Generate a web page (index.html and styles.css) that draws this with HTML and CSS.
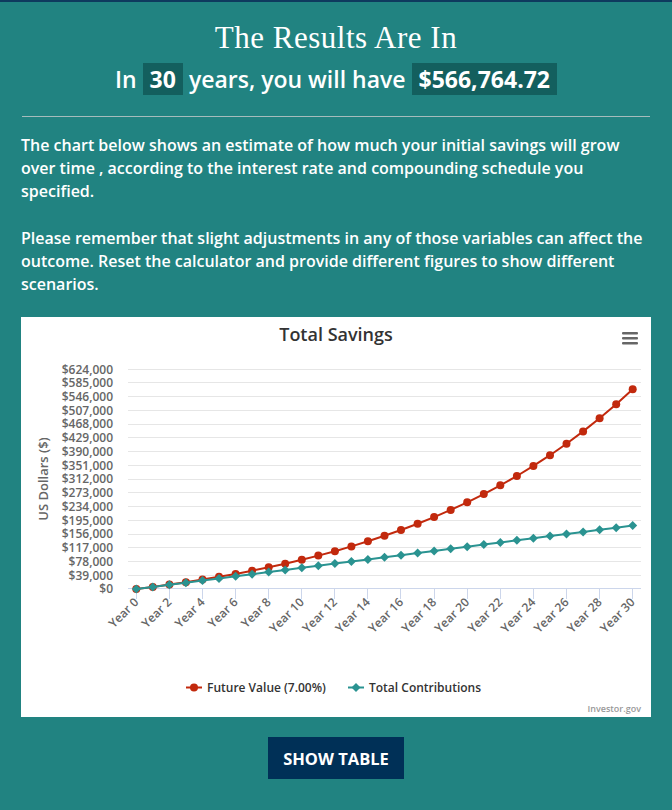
FILE: index.html
```html
<!DOCTYPE html>
<html lang="en">
<head>
<meta charset="utf-8">
<title>The Results Are In</title>
<link rel="stylesheet" href="styles.css">
</head>
<body>
<main class="results">
  <h1 class="title">The Results Are In</h1>
  <p class="summary">In <span class="hl">30</span> years, you will have <span class="hl">$566,764.72</span></p>
  <hr class="rule">
  <p class="desc">The chart below shows an estimate of how much your initial savings will grow over time , according to the interest rate and compounding schedule you specified.</p>
  <p class="desc">Please remember that slight adjustments in any of those variables can affect the outcome. Reset the calculator and provide different figures to show different scenarios.</p>
  <div class="chart">
    <svg class="chart-svg" width="630" height="400" viewBox="0 0 630 400" xmlns="http://www.w3.org/2000/svg">
      <defs>
        <marker id="dot" markerUnits="userSpaceOnUse" markerWidth="10" markerHeight="10" refX="5" refY="5" viewBox="0 0 10 10" overflow="visible">
          <circle cx="5" cy="5" r="4" fill="#c2290d"/>
        </marker>
        <marker id="dia" markerUnits="userSpaceOnUse" markerWidth="10" markerHeight="10" refX="5" refY="5" viewBox="0 0 10 10" overflow="visible">
          <path d="M5 0.5 L9.5 5 L5 9.5 L0.5 5 Z" fill="#2a9391"/>
        </marker>
      </defs>
      <text class="c-title" x="315" y="24" text-anchor="middle">Total Savings</text>
      <g class="menu" fill="#666">
        <rect x="601" y="15" width="16" height="2.5" rx="1"/>
        <rect x="601" y="20" width="16" height="2.5" rx="1"/>
        <rect x="601" y="25" width="16" height="2.5" rx="1"/>
      </g>
      <g class="grid" stroke="#e6e6e6" stroke-width="1">
        <path d="M107 52.5H620M107 65.5H620M107 79.5H620M107 93.5H620M107 107.5H620M107 120.5H620M107 134.5H620M107 148.5H620M107 162.5H620M107 175.5H620M107 189.5H620M107 203.5H620M107 217.5H620M107 230.5H620M107 244.5H620M107 258.5H620"/>
      </g>
      <g class="ylab" text-anchor="end">
        <text x="92" y="56.5">$624,000</text>
        <text x="92" y="70">$585,000</text>
        <text x="92" y="83.5">$546,000</text>
        <text x="92" y="97.5">$507,000</text>
        <text x="92" y="111">$468,000</text>
        <text x="92" y="125">$429,000</text>
        <text x="92" y="138.5">$390,000</text>
        <text x="92" y="152.5">$351,000</text>
        <text x="92" y="166">$312,000</text>
        <text x="92" y="180">$273,000</text>
        <text x="92" y="193.5">$234,000</text>
        <text x="92" y="207.5">$195,000</text>
        <text x="92" y="221">$156,000</text>
        <text x="92" y="235">$117,000</text>
        <text x="92" y="248.5">$78,000</text>
        <text x="92" y="262.5">$39,000</text>
        <text x="92" y="276">$0</text>
      </g>
      <text class="ytitle" x="0" y="0" text-anchor="middle" transform="translate(27 162) rotate(-90)">US Dollars ($)</text>
      <path d="M107 271.5H620" stroke="#ccd6eb" stroke-width="1"/>
      <g stroke="#ccd6eb" stroke-width="1">
        <path d="M115.5 272V282M148.5 272V282M181.5 272V282M214.5 272V282M247.5 272V282M280.5 272V282M313.5 272V282M346.5 272V282M379.5 272V282M413.5 272V282M446.5 272V282M479.5 272V282M512.5 272V282M545.5 272V282M578.5 272V282M611.5 272V282"/>
      </g>
      <g class="xlab" text-anchor="end">
        <text transform="translate(118.3 286) rotate(-45)">Year 0</text>
        <text transform="translate(151.4 286) rotate(-45)">Year 2</text>
        <text transform="translate(184.5 286) rotate(-45)">Year 4</text>
        <text transform="translate(217.6 286) rotate(-45)">Year 6</text>
        <text transform="translate(250.7 286) rotate(-45)">Year 8</text>
        <text transform="translate(283.8 286) rotate(-45)">Year 10</text>
        <text transform="translate(316.9 286) rotate(-45)">Year 12</text>
        <text transform="translate(349.9 286) rotate(-45)">Year 14</text>
        <text transform="translate(383.0 286) rotate(-45)">Year 16</text>
        <text transform="translate(416.1 286) rotate(-45)">Year 18</text>
        <text transform="translate(449.2 286) rotate(-45)">Year 20</text>
        <text transform="translate(482.3 286) rotate(-45)">Year 22</text>
        <text transform="translate(515.4 286) rotate(-45)">Year 24</text>
        <text transform="translate(548.5 286) rotate(-45)">Year 26</text>
        <text transform="translate(581.6 286) rotate(-45)">Year 28</text>
        <text transform="translate(614.7 286) rotate(-45)">Year 30</text>
      </g>
      <polyline class="s-fv" fill="none" stroke="#c2290d" stroke-width="2" stroke-linejoin="round" marker-start="url(#dot)" marker-mid="url(#dot)" marker-end="url(#dot)"
        points="115.3,272 131.8,269.9 148.4,267.6 164.9,265.2 181.5,262.6 198.0,259.8 214.6,256.9 231.1,253.7 247.7,250.3 264.2,246.7 280.8,242.8 297.3,238.6 313.9,234.2 330.4,229.4 346.9,224.3 363.5,218.8 380.0,213.0 396.6,206.8 413.1,200.1 429.7,192.9 446.2,185.3 462.8,177.1 479.3,168.3 495.9,159.0 512.4,148.9 529.0,138.2 545.5,126.7 562.1,114.4 578.6,101.3 595.2,87.2 611.7,72.2"/>
      <polyline class="s-tc" fill="none" stroke="#2a9391" stroke-width="2" stroke-linejoin="round" marker-start="url(#dia)" marker-mid="url(#dia)" marker-end="url(#dia)"
        points="115.3,272 131.8,269.9 148.4,267.8 164.9,265.7 181.5,263.5 198.0,261.4 214.6,259.3 231.1,257.2 247.7,255.1 264.2,253.0 280.8,250.8 297.3,248.7 313.9,246.6 330.4,244.5 346.9,242.4 363.5,240.3 380.0,238.2 396.6,236.0 413.1,233.9 429.7,231.8 446.2,229.7 462.8,227.6 479.3,225.5 495.9,223.3 512.4,221.2 529.0,219.1 545.5,217.0 562.1,214.9 578.6,212.8 595.2,210.7 611.7,208.5"/>
      <g class="legend">
        <path d="M165 370.5H181" stroke="#c2290d" stroke-width="2"/>
        <circle cx="173" cy="370.5" r="4" fill="#c2290d"/>
        <text x="186" y="374.5">Future Value (7.00%)</text>
        <path d="M327 370.5H343" stroke="#2a9391" stroke-width="2"/>
        <path d="M335 366 L339.5 370.5 L335 375 L330.5 370.5 Z" fill="#2a9391"/>
        <text x="348" y="374.5">Total Contributions</text>
      </g>
      <text class="credits" x="620" y="395" text-anchor="end">Investor.gov</text>
    </svg>
  </div>
  <div class="actions">
    <button class="btn" type="button">Show Table</button>
  </div>
</main>
</body>
</html>
```

FILE: styles.css
```css
html {
  background: #218381;
}
body {
  margin: 0;
  min-height: 808px;
  background: #218381;
  border-top: 2px solid #0e3a5e;
  color: #fff;
  font-family: "Open Sans", "Noto Sans", sans-serif;
}
.results {
  padding: 0 21px;
}
.title {
  margin: 0;
  padding-top: 18px;
  font-family: "Liberation Serif", "DejaVu Serif", serif;
  font-weight: normal;
  font-size: 31px;
  line-height: 36px;
  text-align: center;
  letter-spacing: 0.5px;
}
.summary {
  margin: 7px 0 0;
  font-size: 23px;
  font-weight: 600;
  line-height: 32px;
  text-align: center;
}
.hl {
  display: inline-block;
  background: #135f5e;
  padding: 0 7px;
  font-weight: 700;
  line-height: 32px;
}
.rule {
  margin: 21px 1px 0;
  border: 0;
  border-top: 1px solid #a6bcbc;
  height: 0;
}
.desc {
  margin: 17px 0 0;
  font-size: 16px;
  font-weight: 600;
  line-height: 23px;
}
.desc + .desc {
  margin-top: 24px;
}
.chart {
  margin-top: 21px;
  background: #fff;
  height: 400px;
}
.chart-svg {
  display: block;
  font-family: "Open Sans", "DejaVu Sans", sans-serif;
}
.c-title {
  font-size: 18px;
  font-weight: 600;
  fill: #333;
}
.ylab text {
  font-size: 12px;
  font-weight: 600;
  fill: #666;
}
.ytitle {
  font-size: 13px;
  font-weight: 600;
  fill: #666;
}
.xlab text {
  font-size: 12px;
  font-weight: 600;
  fill: #666;
}
.legend text {
  font-size: 12px;
  font-weight: 600;
  fill: #333;
}
.credits {
  font-size: 9px;
  font-weight: 600;
  fill: #999;
}
.actions {
  padding-top: 20px;
  text-align: center;
}
.btn {
  height: 42px;
  padding: 0 15px;
  border: 0;
  border-radius: 0;
  background: #003057;
  color: #fff;
  font-family: "Open Sans", "Noto Sans", sans-serif;
  font-size: 16.5px;
  font-weight: 700;
  text-transform: uppercase;
}
```
